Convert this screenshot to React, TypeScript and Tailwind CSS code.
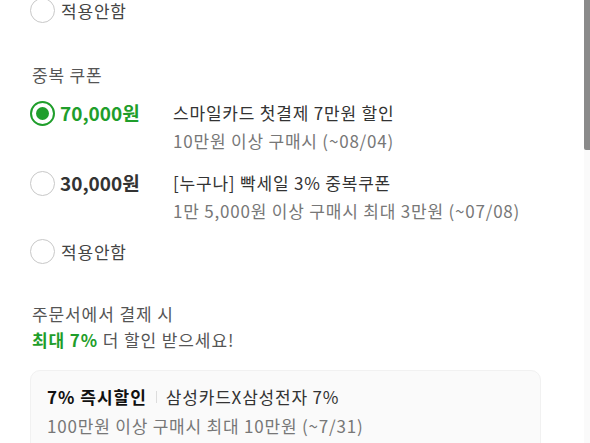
const GREEN = 'text-[#1f9e2b]';

const Radio = ({ checked = false }: { checked?: boolean }) =>
  checked ? (
    <span className="w-[25px] h-[25px] rounded-full border-2 border-[#1f9e2b] bg-white flex items-center justify-center flex-shrink-0">
      <span className="w-[13px] h-[13px] rounded-full bg-[#1f9e2b]" />
    </span>
  ) : (
    <span className="w-[25px] h-[25px] rounded-full border-[1.5px] border-[#c8c8c8] bg-white flex-shrink-0" />
  );

const coupons = [
  {
    amount: '70,000원',
    title: '스마일카드 첫결제 7만원 할인',
    sub: '10만원 이상 구매시 (~08/04)',
    checked: true,
  },
  {
    amount: '30,000원',
    title: '[누구나] 빡세일 3% 중복쿠폰',
    sub: '1만 5,000원 이상 구매시 최대 3만원 (~07/08)',
    checked: false,
  },
];

const NoneOption = ({ className = '' }: { className?: string }) => (
  <label className={`flex items-center gap-[6px] h-[25px] ${className}`}>
    <Radio />
    <span className="text-[17px] leading-[18px] tracking-[0.8px] text-[#444]">적용안함</span>
  </label>
);

export default function App() {
  return (
    <div
      className="relative w-[590px] h-[443px] overflow-hidden bg-white pl-[30px]"
      style={{ fontFamily: '"Noto Sans CJK KR", "Noto Sans", sans-serif' }}
    >
      <NoneOption className="mt-[-2px]" />

      <p className="mt-[40px] pl-[2px] text-[17px] leading-[24px] tracking-[0.8px] text-[#555]">중복 쿠폰</p>

      <div className="mt-[13px] flex flex-col gap-[16px]">
        {coupons.map((c) => (
          <div key={c.amount} className="flex">
            <div className="w-[143px] flex items-center gap-[5px] h-[26px] flex-shrink-0">
              <Radio checked={c.checked} />
              <span
                className={`text-[19px] leading-[26px] font-bold ${
                  c.checked ? GREEN : 'text-[#333]'
                }`}
              >
                {c.amount}
              </span>
            </div>
            <div className="flex flex-col gap-[2px] text-[17px] leading-[26px] tracking-[0.8px]">
              <span className="text-[#333]">{c.title}</span>
              <span className="text-[#777]">{c.sub}</span>
            </div>
          </div>
        ))}
      </div>

      <NoneOption className="mt-[15px]" />

      <div className="mt-[37px] pl-[2px] text-[17px] leading-[26px] tracking-[0.9px] text-[#555]">
        <p>주문서에서 결제 시</p>
        <p>
          <b className={`font-bold ${GREEN}`}>최대 7%</b> 더 할인 받으세요!
        </p>
      </div>

      <div className="mt-[17px] w-[511px] h-[120px] rounded-[10px] bg-[#fafafa] border border-[#f1f1f1] pl-[16px] pt-[13px] text-[17px] leading-[26px] tracking-[0.8px]">
        <p className="flex items-center">
          <b className="font-bold text-[#111] tracking-[1px]">7% 즉시할인</b>
          <span className="mx-[9px] w-px h-[12px] bg-[#dddddd]" />
          <span className="text-[#333]">삼성카드X삼성전자 7%</span>
        </p>
        <p className="mt-[3px] text-[#777]">100만원 이상 구매시 최대 10만원 (~7/31)</p>
      </div>

      <div className="absolute right-0 top-0 w-[6px] h-full bg-[#fafafa]" />
      <div className="absolute right-0 top-0 w-[6px] h-[150px] rounded-bl-[2px] bg-[#8a8a8a]" />
    </div>
  );
}
